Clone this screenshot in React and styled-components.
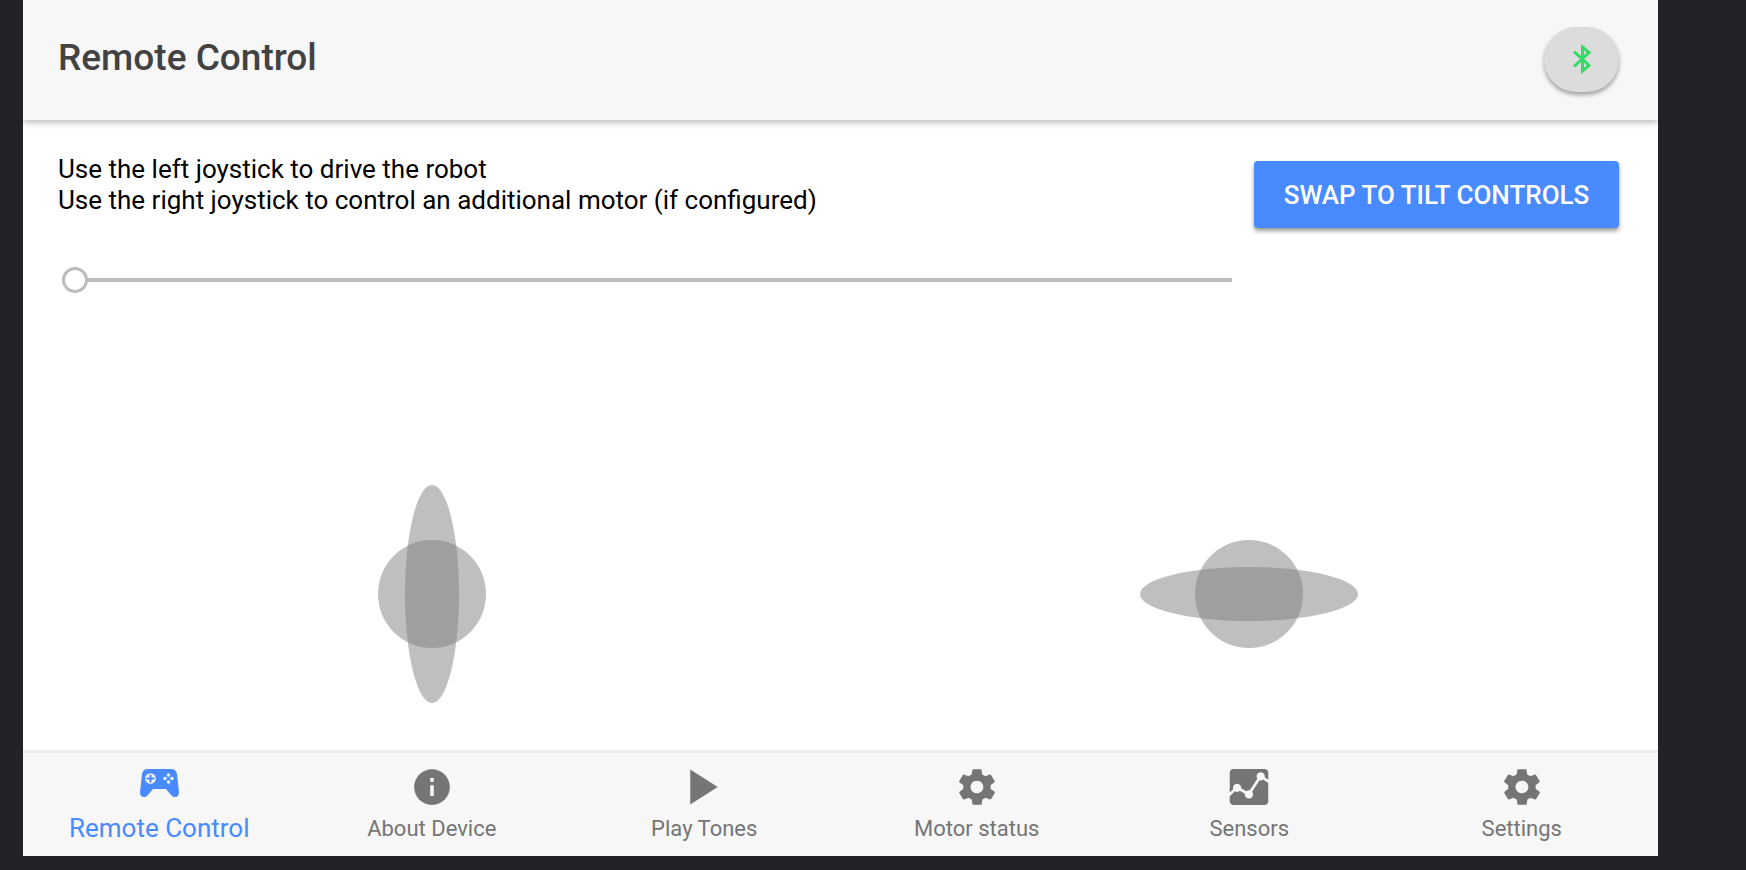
import React, { useState } from "react";
import styled, { createGlobalStyle } from "styled-components";
import {
  IoMdInformationCircle,
  IoMdPlay,
  IoMdSettings,
  IoMdAnalytics,
} from "react-icons/io";

const GlobalStyle = createGlobalStyle`
  *, *::before, *::after { box-sizing: border-box; }
  body {
    margin: 0;
    background: #232227;
    color: #000;
    font-family: Roboto, "Liberation Sans", sans-serif;
  }
`;

const Backdrop = styled.div`
  display: flex;
  min-height: 100vh;
  padding: 0 88px 14px 23px;
  background: #232227;
`;

const Screen = styled.div`
  display: flex;
  flex: 1;
  flex-direction: column;
  min-width: 0;
  overflow: hidden;
  background: #fff;
`;

const Header = styled.header`
  display: flex;
  align-items: center;
  justify-content: space-between;
  height: 120px;
  padding: 0 39px 2px 35px;
  background: #f7f7f7;
  box-shadow: 0 2px 7px rgba(0, 0, 0, 0.3);
`;

const Title = styled.h1`
  margin: 0;
  padding-bottom: 2px;
  color: #424242;
  font-size: 37px;
  font-weight: 500;
  line-height: 44px;
`;

const BluetoothButton = styled.button`
  display: flex;
  align-items: center;
  justify-content: center;
  width: 75px;
  height: 65px;
  padding: 0;
  border: 0;
  border-radius: 33px;
  background: #dcdcdc;
  color: #32db64;
  box-shadow: 0 3px 4px rgba(0, 0, 0, 0.35);
`;

const Content = styled.main`
  display: flex;
  flex: 1;
  flex-direction: column;
  padding-top: 34px;
`;

const Controls = styled.section`
  display: flex;
  align-items: flex-start;
  gap: 20px;
  padding: 0 39px 0 35px;
`;

const DriveColumn = styled.div`
  display: flex;
  flex: 1;
  flex-direction: column;
  gap: 50px;
  min-width: 0;
`;

const Instructions = styled.p`
  margin: 0;
  font-size: 26px;
  line-height: 31px;
`;

const Slider = styled.input`
  appearance: none;
  display: block;
  height: 28px;
  margin: 0 2px 0 4px;
  background: linear-gradient(#bdbdbd, #bdbdbd) center / 100% 4px no-repeat;

  &::-webkit-slider-thumb {
    appearance: none;
    width: 26px;
    height: 26px;
    border: 3px solid #bdbdbd;
    border-radius: 50%;
    background: #fff;
  }
`;

const SwapButton = styled.button`
  min-width: 365px;
  height: 67px;
  margin-top: 7px;
  padding: 0 20px;
  border: 0;
  border-radius: 4px;
  background: #488aff;
  color: #fff;
  font-family: inherit;
  font-size: 26px;
  font-weight: 500;
  text-transform: uppercase;
  white-space: nowrap;
  box-shadow: 0 3px 4px rgba(0, 0, 0, 0.4);
`;

const Joysticks = styled.section`
  display: grid;
  flex: 1;
  grid-template-columns: 1fr 1fr;
  align-items: end;
  justify-items: center;
  padding-bottom: 47px;
`;

const JoystickPad = styled.svg`
  display: block;
  width: 218px;
  height: 218px;
  fill: #808080;
  fill-opacity: 0.5;
`;

const TabBar = styled.nav`
  display: grid;
  grid-template-columns: repeat(6, 1fr);
  height: 106px;
  border-top: 3px solid #ebebeb;
  background: #f7f7f7;
`;

const Tab = styled.a`
  display: flex;
  flex-direction: column;
  align-items: center;
  padding-top: 10px;
  color: ${(p) => (p.$active ? "#488aff" : "#757575")};
  font-size: ${(p) => (p.$active ? 26 : 22)}px;
  line-height: 28px;
  text-decoration: none;
`;

const TabIcon = styled.span`
  display: flex;
  align-items: center;
  justify-content: center;
  height: ${(p) => (p.$active ? 40 : 48)}px;
  margin-bottom: ${(p) => (p.$active ? 11 : 4)}px;
`;

function BluetoothIcon() {
  return (
    <svg width="20" height="30" viewBox="0 0 20 30" fill="none" stroke="currentColor" strokeWidth="3" aria-hidden="true">
      <path d="M2 7.5 17 21.5 10.5 27V3L17 8.5 2 22.5" />
    </svg>
  );
}

function GamepadIcon() {
  return (
    <svg width="39" height="28" viewBox="0 0 39 28" aria-hidden="true">
      <path
        fill="currentColor"
        d="M8 0H31Q36 0 37 5L39 23Q39 28 35 28Q33 28 31.500 26.500L26 20H13L7.500 26.500Q6 28 4 28Q0 28 0 23L2 5Q3 0 8 0Z"
      />
      <circle cx="10.500" cy="9.500" r="5.300" fill="#f7f7f7" />
      <path stroke="currentColor" strokeWidth="2" d="M10.500 5.500V13.500M6.500 9.500H14.500" />
      <g fill="#f7f7f7">
        <circle cx="28.500" cy="6" r="1.700" />
        <circle cx="28.500" cy="13" r="1.700" />
        <circle cx="25" cy="9.500" r="1.700" />
        <circle cx="32" cy="9.500" r="1.700" />
      </g>
    </svg>
  );
}

const tabs = [
  { label: "Remote Control", Icon: GamepadIcon },
  { label: "About Device", Icon: IoMdInformationCircle },
  { label: "Play Tones", Icon: IoMdPlay },
  { label: "Motor status", Icon: IoMdSettings },
  { label: "Sensors", Icon: IoMdAnalytics },
  { label: "Settings", Icon: IoMdSettings },
];

function Joystick({ label, rx, ry }) {
  return (
    <JoystickPad viewBox="0 0 218 218" role="img" aria-label={label}>
      <circle cx="109" cy="109" r="54" />
      <ellipse cx="109" cy="109" rx={rx} ry={ry} />
    </JoystickPad>
  );
}

export default function App() {
  const [speed, setSpeed] = useState(0);

  return (
    <>
      <GlobalStyle />
      <Backdrop>
        <Screen>
          <Header>
            <Title>Remote Control</Title>
            <BluetoothButton type="button" aria-label="Bluetooth">
              <BluetoothIcon />
            </BluetoothButton>
          </Header>
          <Content>
            <Controls>
              <DriveColumn>
                <Instructions>
                  Use the left joystick to drive the robot
                  <br />
                  Use the right joystick to control an additional motor (if configured)
                </Instructions>
                <Slider
                  type="range"
                  min="0"
                  max="100"
                  value={speed}
                  onChange={(e) => setSpeed(Number(e.target.value))}
                  aria-label="Additional motor"
                />
              </DriveColumn>
              <SwapButton type="button">Swap to tilt controls</SwapButton>
            </Controls>
            <Joysticks>
              <Joystick label="Drive joystick" rx={27} ry={109} />
              <Joystick label="Motor joystick" rx={109} ry={27} />
            </Joysticks>
          </Content>
          <TabBar>
            {tabs.map(({ label, Icon }, i) => (
              <Tab key={label} href="#" $active={i === 0} aria-current={i === 0 ? "page" : undefined}>
                <TabIcon $active={i === 0}>
                  <Icon size={44} />
                </TabIcon>
                {label}
              </Tab>
            ))}
          </TabBar>
        </Screen>
      </Backdrop>
    </>
  );
}
